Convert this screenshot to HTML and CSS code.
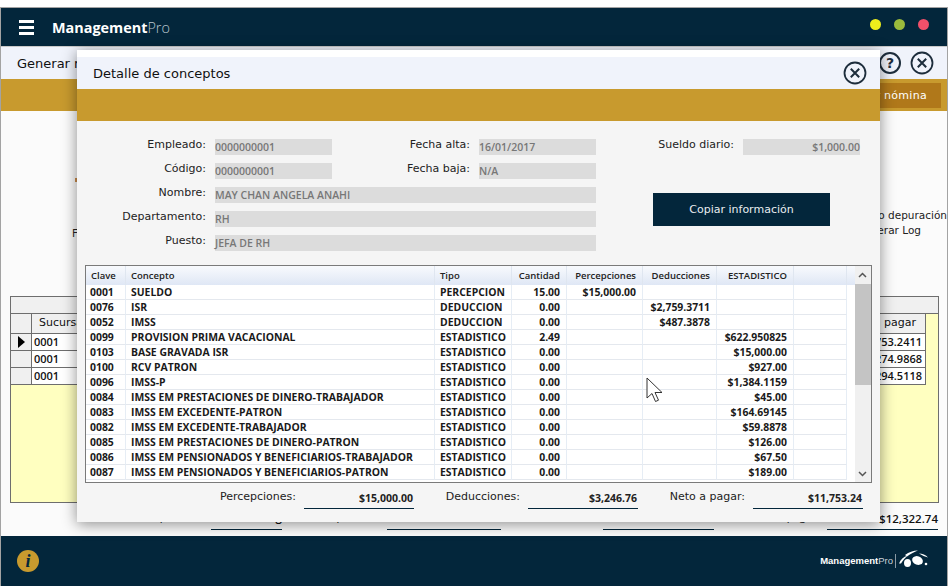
FILE: index.html
```html
<!DOCTYPE html>
<html lang="en">
<head>
    <meta charset="UTF-8">
    <title>ManagementPro</title>
    <link rel="stylesheet" href="styles.css">
</head>
<body>
    <div class="window">
        <header class="topbar">
            <div class="hamburger"><span></span><span></span><span></span></div>
            <div class="brand">Management<span>Pro</span></div>
            <div class="win-buttons">
                <span class="dot dot-yellow"></span>
                <span class="dot dot-green"></span>
                <span class="dot dot-red"></span>
            </div>
        </header>

        <div class="subbar">
            <span class="subbar-title">Generar nómina</span>
            <div class="subbar-icons">
                <span class="round-icon">?</span>
                <svg class="close-icon" viewBox="0 0 24 24"><circle cx="12" cy="12" r="10.5"/><path d="M7.8 7.8l8.4 8.4M16.2 7.8l-8.4 8.4"/></svg>
            </div>
        </div>

        <div class="goldbar">
            <button class="gold-btn">Generar nómina</button>
        </div>

        <main class="content">
            <div class="tick"></div>
            <div class="filters">
                <span class="filter-left">Filtros:</span>
                <div class="filter-right">
                    <span>Modo depuración</span>
                    <span>Generar Log</span>
                </div>
            </div>

            <div class="grid-box">
                <div class="grid-title"></div>
                <div class="grid-row grid-head">
                    <div class="cell cell-ind"></div>
                    <div class="cell cell-main">Sucursal</div>
                    <div class="cell cell-end">a pagar</div>
                </div>
                <div class="grid-row">
                    <div class="cell cell-ind"><span class="arrow"></span></div>
                    <div class="cell cell-main">0001</div>
                    <div class="cell cell-end">$11,753.2411</div>
                </div>
                <div class="grid-row">
                    <div class="cell cell-ind"></div>
                    <div class="cell cell-main">0001</div>
                    <div class="cell cell-end">$12,274.9868</div>
                </div>
                <div class="grid-row">
                    <div class="cell cell-ind"></div>
                    <div class="cell cell-main">0001</div>
                    <div class="cell cell-end">$12,294.5118</div>
                </div>
            </div>

            <div class="grand-totals">
                <span class="gt-label gt-a">Empleados:</span>
                <span class="gt-value gt-va">Reg</span>
                <span class="gt-label gt-b">Percepciones:</span>
                <span class="gt-value gt-vb">$15,302.52</span>
                <span class="gt-label gt-c">Deducciones:</span>
                <span class="gt-value gt-vc">$3,259.38</span>
                <span class="gt-label gt-d">Neto a pagar:</span>
                <span class="gt-value gt-vd">$12,322.74</span>
            </div>
        </main>

        <footer class="footer">
            <span class="info-icon">i</span>
            <div class="footer-logo">
                <span class="footer-brand">Management<span>Pro</span></span>
                <svg class="footer-mark" width="30" height="22" viewBox="0 0 30 22">
                    <path d="M0 13.500C1.500 9.500 4.500 7 8.500 5.500 6 8 4 10.500 2 13.500z"/>
                    <path d="M6 5C10 2 14 .5 19 .5 15 2 11 4 8 6.500z"/>
                    <ellipse cx="8.500" cy="13" rx="3.500" ry="4"/>
                    <ellipse cx="18.500" cy="10.500" rx="5.500" ry="4.200" transform="rotate(20 18.500 10.500)"/>
                    <path d="M20 3.500C23 3.500 27 5 29 7.500 26 6.500 23 5.500 20 3.500z"/>
                    <circle cx="27" cy="14" r="1.300"/>
                </svg>
            </div>
        </footer>
    </div>

    <!-- Detalle de conceptos dialog -->
    <section class="modal">
        <div class="modal-head">
            <h1>Detalle de conceptos</h1>
            <svg class="close-icon" viewBox="0 0 24 24"><circle cx="12" cy="12" r="10.5"/><path d="M7.8 7.8l8.4 8.4M16.2 7.8l-8.4 8.4"/></svg>
        </div>
        <div class="modal-gold"></div>

        <div class="form">
            <label class="lbl">Empleado:</label>
            <div class="field">0000000001</div>
            <label class="lbl">Fecha alta:</label>
            <div class="field">16/01/2017</div>
            <label class="lbl">Sueldo diario:</label>
            <div class="field field-right">$1,000.00</div>

            <label class="lbl">Código:</label>
            <div class="field">0000000001</div>
            <label class="lbl">Fecha baja:</label>
            <div class="field">N/A</div>

            <label class="lbl lbl-first">Nombre:</label>
            <div class="field field-wide">MAY CHAN ANGELA ANAHI</div>
            <label class="lbl lbl-first">Departamento:</label>
            <div class="field field-wide">RH</div>
            <label class="lbl lbl-first">Puesto:</label>
            <div class="field field-wide">JEFA DE RH</div>

            <button class="copy-btn">Copiar información</button>
        </div>

        <div class="table-box">
            <table class="concepts">
                <colgroup>
                    <col class="c-clave"><col class="c-concepto"><col class="c-tipo"><col class="c-cant">
                    <col class="c-perc"><col class="c-ded"><col class="c-est"><col class="c-blank"><col class="c-fill">
                </colgroup>
                <thead>
                    <tr>
                        <th>Clave</th><th>Concepto</th><th>Tipo</th><th class="num">Cantidad</th>
                        <th class="num">Percepciones</th><th class="num">Deducciones</th><th class="num">ESTADISTICO</th><th></th><th class="fill"></th>
                    </tr>
                </thead>
                <tbody>
                    <tr><td>0001</td><td>SUELDO</td><td>PERCEPCION</td><td class="num">15.00</td><td class="num">$15,000.00</td><td></td><td></td><td></td><td class="fill"></td></tr>
                    <tr><td>0076</td><td>ISR</td><td>DEDUCCION</td><td class="num">0.00</td><td></td><td class="num">$2,759.3711</td><td></td><td></td><td class="fill"></td></tr>
                    <tr><td>0052</td><td>IMSS</td><td>DEDUCCION</td><td class="num">0.00</td><td></td><td class="num">$487.3878</td><td></td><td></td><td class="fill"></td></tr>
                    <tr><td>0099</td><td>PROVISION PRIMA VACACIONAL</td><td>ESTADISTICO</td><td class="num">2.49</td><td></td><td></td><td class="num">$622.950825</td><td></td><td class="fill"></td></tr>
                    <tr><td>0103</td><td>BASE GRAVADA ISR</td><td>ESTADISTICO</td><td class="num">0.00</td><td></td><td></td><td class="num">$15,000.00</td><td></td><td class="fill"></td></tr>
                    <tr><td>0100</td><td>RCV PATRON</td><td>ESTADISTICO</td><td class="num">0.00</td><td></td><td></td><td class="num">$927.00</td><td></td><td class="fill"></td></tr>
                    <tr><td>0096</td><td>IMSS-P</td><td>ESTADISTICO</td><td class="num">0.00</td><td></td><td></td><td class="num">$1,384.1159</td><td></td><td class="fill"></td></tr>
                    <tr><td>0084</td><td>IMSS EM PRESTACIONES DE DINERO-TRABAJADOR</td><td>ESTADISTICO</td><td class="num">0.00</td><td></td><td></td><td class="num">$45.00</td><td></td><td class="fill"></td></tr>
                    <tr><td>0083</td><td>IMSS EM EXCEDENTE-PATRON</td><td>ESTADISTICO</td><td class="num">0.00</td><td></td><td></td><td class="num">$164.69145</td><td></td><td class="fill"></td></tr>
                    <tr><td>0082</td><td>IMSS EM EXCEDENTE-TRABAJADOR</td><td>ESTADISTICO</td><td class="num">0.00</td><td></td><td></td><td class="num">$59.8878</td><td></td><td class="fill"></td></tr>
                    <tr><td>0085</td><td>IMSS EM PRESTACIONES DE DINERO-PATRON</td><td>ESTADISTICO</td><td class="num">0.00</td><td></td><td></td><td class="num">$126.00</td><td></td><td class="fill"></td></tr>
                    <tr><td>0086</td><td>IMSS EM PENSIONADOS Y BENEFICIARIOS-TRABAJADOR</td><td>ESTADISTICO</td><td class="num">0.00</td><td></td><td></td><td class="num">$67.50</td><td></td><td class="fill"></td></tr>
                    <tr><td>0087</td><td>IMSS EM PENSIONADOS Y BENEFICIARIOS-PATRON</td><td>ESTADISTICO</td><td class="num">0.00</td><td></td><td></td><td class="num">$189.00</td><td></td><td class="fill"></td></tr>
                </tbody>
            </table>
            <div class="scrollbar">
                <svg class="sb-arrow" width="15" height="18" viewBox="0 0 15 18"><path d="M4 11l3.500-3.500L11 11" fill="none" stroke="#555" stroke-width="1.500"/></svg>
                <div class="sb-thumb"></div>
                <div class="sb-track"></div>
                <svg class="sb-arrow" width="15" height="16" viewBox="0 0 15 16"><path d="M4 6l3.500 3.500L11 6" fill="none" stroke="#555" stroke-width="1.500"/></svg>
            </div>
        </div>

        <div class="totals">
            <div class="total"><span>Percepciones:</span><strong>$15,000.00</strong></div>
            <div class="total"><span>Deducciones:</span><strong>$3,246.76</strong></div>
            <div class="total"><span>Neto a pagar:</span><strong>$11,753.24</strong></div>
        </div>

        <svg class="cursor" width="18" height="26" viewBox="0 0 18 26"><path d="M1 1v20l5-4.500 3.500 8 3-1.300-3.500-7.700h7z" fill="#fff" stroke="#333" stroke-width="1"/></svg>
    </section>
</body>
</html>
```

FILE: styles.css
```css
* {
    box-sizing: border-box;
}

html, body {
    margin: 0;
    height: 587px;
    overflow: hidden;
}

body {
    position: relative;
    padding-top: 7px;
    background-color: #fff;
    font-family: 'DejaVu Sans', sans-serif;
    font-size: 11px;
    color: #222;
}

.window {
    display: flex;
    flex-direction: column;
    height: 579px;
    border: 1px solid #a3a3a3;
    border-bottom: none;
    overflow: hidden;
    background-color: #fff;
}

/* Top bar */
.topbar {
    display: flex;
    align-items: center;
    height: 38px;
    flex: none;
    padding-left: 18px;
    background-color: #03263b;
    color: #fff;
}

.hamburger {
    display: flex;
    flex-direction: column;
    gap: 3px;
    width: 15px;
}

.hamburger span {
    height: 3px;
    background-color: #fff;
}

.brand {
    margin-left: 18px;
    font-family: 'Open Sans', sans-serif;
    font-size: 14.400px;
    font-weight: 700;
}

.brand span {
    font-weight: 300;
    color: #b9c6cf;
}

.win-buttons {
    display: flex;
    gap: 13px;
    margin-left: auto;
    margin-right: 18px;
    margin-top: -6px;
}

.dot {
    width: 11px;
    height: 11px;
    border-radius: 50%;
}

.dot-yellow { background-color: #eeee1c; }
.dot-green { background-color: #9bbb3c; }
.dot-red { background-color: #f0506a; }

/* Sub bar */
.subbar {
    display: flex;
    align-items: center;
    height: 33px;
    flex: none;
    padding: 0 13px 0 16px;
    border-top: 1px solid #c9c9c9;
    background-color: #f0f3fb;
}

.subbar-title {
    font-size: 13px;
    color: #111;
}

.subbar-icons {
    display: flex;
    align-items: center;
    gap: 9px;
    margin-left: auto;
}

.round-icon {
    display: flex;
    align-items: center;
    justify-content: center;
    width: 22px;
    height: 22px;
    border: 2px solid #1d2d3c;
    border-radius: 50%;
    font-size: 14px;
    font-weight: 700;
    color: #1d2d3c;
}

.close-icon {
    width: 24px;
    height: 24px;
    flex: none;
}

.close-icon circle {
    fill: none;
    stroke: #1d2d3c;
    stroke-width: 1.800;
}

.close-icon path {
    fill: none;
    stroke: #1d2d3c;
    stroke-width: 2;
}

.goldbar {
    display: flex;
    justify-content: flex-end;
    align-items: center;
    height: 32px;
    flex: none;
    padding-right: 6px;
    background-color: #c89a2e;
}

.gold-btn {
    width: 140px;
    height: 25px;
    border: none;
    padding: 0 14px 0 0;
    text-align: right;
    background-color: #b0781a;
    color: #fff;
    font-family: 'DejaVu Sans', sans-serif;
    font-size: 11px;
    letter-spacing: 0.3px;
}

/* Content behind the dialog */
.content {
    flex: 1;
    min-height: 0;
    padding-left: 9px;
    background-color: #fbfbfb;
}

.tick {
    width: 3px;
    height: 4px;
    margin: 67px 0 0 65px;
    background-color: #c98a4a;
}

.filters {
    display: flex;
    justify-content: space-between;
    margin-top: 27px;
    height: 87px;
    font-size: 10.500px;
}

.filter-left {
    margin: 18px 0 0 62px;
    height: 14px;
}

.filter-right {
    display: flex;
    flex-direction: column;
    gap: 3px;
}

.grid-box {
    width: 929px;
    height: 207px;
    border: 1px solid #6e6e6e;
    background-color: #ffffc0;
}

.grid-title {
    height: 17px;
    border-bottom: 1px solid #6e6e6e;
    background-color: #f0f0f0;
}

.grid-row {
    display: flex;
    width: 915px;
    height: 17px;
}

.grid-head {
    height: 20px;
}

.cell {
    display: flex;
    align-items: center;
    padding-bottom: 2px;
    border-right: 1px solid #6e6e6e;
    border-bottom: 1px solid #6e6e6e;
    background-color: #fff;
    font-family: 'Open Sans', sans-serif;
    font-size: 11px;
    font-weight: 600;
    color: #111;
}

.cell-ind {
    width: 21px;
    justify-content: center;
    padding-bottom: 0;
    background-color: #f0f0f0;
}

.cell-main {
    flex: 1;
    padding-left: 2px;
}

.cell-end {
    width: 96px;
    justify-content: flex-end;
    padding-right: 3px;
}

.grid-head .cell {
    background-color: #f0f0f0;
    padding-left: 7px;
    font-family: 'DejaVu Sans', sans-serif;
    font-weight: 400;
}

.grid-head .cell-end {
    padding-right: 9px;
}

.arrow {
    width: 0;
    height: 0;
    border-top: 6px solid transparent;
    border-bottom: 6px solid transparent;
    border-left: 7px solid #000;
}

.grand-totals {
    display: flex;
    gap: 8px;
    margin-top: 3px;
    margin-left: 75px;
    font-family: 'Open Sans', sans-serif;
    font-size: 11px;
    line-height: 16px;
    color: #111;
}

.gt-label, .gt-value {
    height: 24px;
    text-align: right;
    white-space: nowrap;
}

.gt-label {
    padding-top: 2px;
}

.gt-value {
    padding-top: 3px;
    border-bottom: 1px solid #03263b;
    font-size: 11.500px;
    font-weight: 600;
}

.gt-a { width: 118px; }
.gt-va { width: 71px; }
.gt-b { width: 89px; }
.gt-vb { width: 114px; }
.gt-c { width: 86px; }
.gt-vc { width: 111px; }
.gt-d { width: 97px; }
.gt-vd { width: 111px; padding-top: 5px; }

/* Footer */
.footer {
    display: flex;
    align-items: center;
    justify-content: space-between;
    height: 50px;
    flex: none;
    padding: 0 18px 0 16px;
    background-color: #03263b;
}

.info-icon {
    display: flex;
    align-items: center;
    justify-content: center;
    width: 22px;
    height: 22px;
    border-radius: 50%;
    background-color: #c89a2e;
    font-family: 'Liberation Serif', serif;
    font-size: 18px;
    font-weight: 700;
    font-style: italic;
    color: #03263b;
}

.footer-logo {
    display: flex;
    align-items: center;
    gap: 3px;
}

.footer-brand {
    padding-right: 2px;
    border-right: 1px solid #8a9aa5;
    font-family: 'Liberation Sans', sans-serif;
    font-size: 9.500px;
    line-height: 14px;
    font-weight: 700;
    color: #fff;
}

.footer-brand span {
    font-weight: 400;
    color: #c8d2d9;
}

.footer-mark {
    fill: #fff;
}

/* Dialog */
.modal {
    position: absolute;
    left: 77px;
    top: 50px;
    width: 803px;
    height: 472px;
    padding-top: 7px;
    background-color: #f5f5f5;
    box-shadow: 0 2px 14px rgba(0,0,0,0.45);
}

.modal::before {
    content: '';
    position: absolute;
    left: 0;
    top: 0;
    width: 100%;
    height: 7px;
    background-color: #fff;
}

.modal-head {
    display: flex;
    align-items: center;
    justify-content: space-between;
    height: 32px;
    padding: 0 13px 0 16px;
    background-color: #f0f3fb;
}

.modal-head h1 {
    margin: 0;
    font-size: 13px;
    font-weight: 400;
    color: #111;
}

.modal-gold {
    height: 32px;
    background-color: #c89a2e;
}

.form {
    display: grid;
    grid-template-columns: 129px 117px 129px 117px 129px 117px;
    grid-auto-rows: 16px;
    column-gap: 9px;
    row-gap: 8px;
    padding-top: 18px;
}

.lbl {
    text-align: right;
    line-height: 11px;
    white-space: nowrap;
    font-size: 11px;
    color: #222;
}

.lbl-first {
    grid-column: 1;
}

.field {
    background-color: #dcdcdc;
    font-family: 'Open Sans', sans-serif;
    font-size: 10.500px;
    font-weight: 600;
    line-height: 16px;
    color: #777;
    white-space: nowrap;
}

.field-wide {
    grid-column: 2 / 5;
}

.field-right {
    text-align: right;
}

.copy-btn {
    grid-column: 5 / 7;
    grid-row: 3 / 6;
    width: 177px;
    height: 33px;
    margin: 6px 0 0 48px;
    padding: 0 0 1px;
    border: none;
    background-color: #03263b;
    color: #e8edf0;
    font-family: 'DejaVu Sans', sans-serif;
    font-size: 11px;
}

/* Concept table */
.table-box {
    display: flex;
    width: 787px;
    height: 218px;
    margin: 14px 0 0 8px;
    border: 1px solid #7a7a7a;
    background-color: #fff;
    overflow: hidden;
}

.concepts {
    width: 769px;
    flex: none;
    align-self: flex-start;
    table-layout: fixed;
    border-collapse: separate;
    border-spacing: 0;
    font-family: 'Open Sans', sans-serif;
    font-size: 10.400px;
    font-weight: 700;
    color: #1a1a1a;
}

.c-clave { width: 40px; }
.c-concepto { width: 309px; }
.c-tipo { width: 77px; }
.c-cant { width: 55px; }
.c-perc { width: 76px; }
.c-ded { width: 74px; }
.c-est { width: 77px; }
.c-blank { width: 53px; }
.c-fill { width: 8px; }

.concepts th {
    height: 19px;
    padding: 0 5px;
    border-right: 1px solid #dfe6f0;
    background: linear-gradient(#f8fafd, #dfe7f5);
    font-size: 9.500px;
    font-weight: 600;
    text-align: left;
    color: #222;
    white-space: nowrap;
}

.concepts td {
    height: 15px;
    padding: 0 5px;
    border-right: 1px solid #e6edf5;
    border-bottom: 1px solid #e4e8ee;
    line-height: 14px;
    white-space: nowrap;
    overflow: hidden;
}

.concepts td:first-child {
    padding-left: 4px;
}

.concepts th.num, .concepts td.num {
    padding-right: 6px;
    text-align: right;
}

.concepts .fill {
    border: none;
}

.scrollbar {
    display: flex;
    flex-direction: column;
    flex: 1;
    background-color: #f0f0f0;
}

.sb-arrow {
    flex: none;
    display: block;
}

.sb-thumb {
    height: 101px;
    flex: none;
    background-color: #c4c4c4;
}

.sb-track {
    flex: 1;
}

/* Totals under the table */
.totals {
    display: grid;
    grid-template-columns: 224px 224px 225px;
    margin: 6px 0 0 113px;
}

.total {
    display: flex;
    justify-content: flex-end;
    gap: 8px;
    font-size: 11px;
}

.total strong {
    width: 110px;
    height: 20px;
    padding: 2px 1px 0 0;
    border-bottom: 1px solid #03263b;
    font-family: 'Open Sans', sans-serif;
    font-size: 10.500px;
    font-weight: 700;
    text-align: right;
}

.total span {
    padding-top: 1px;
}

.cursor {
    position: absolute;
    left: 569px;
    top: 327px;
}
```
